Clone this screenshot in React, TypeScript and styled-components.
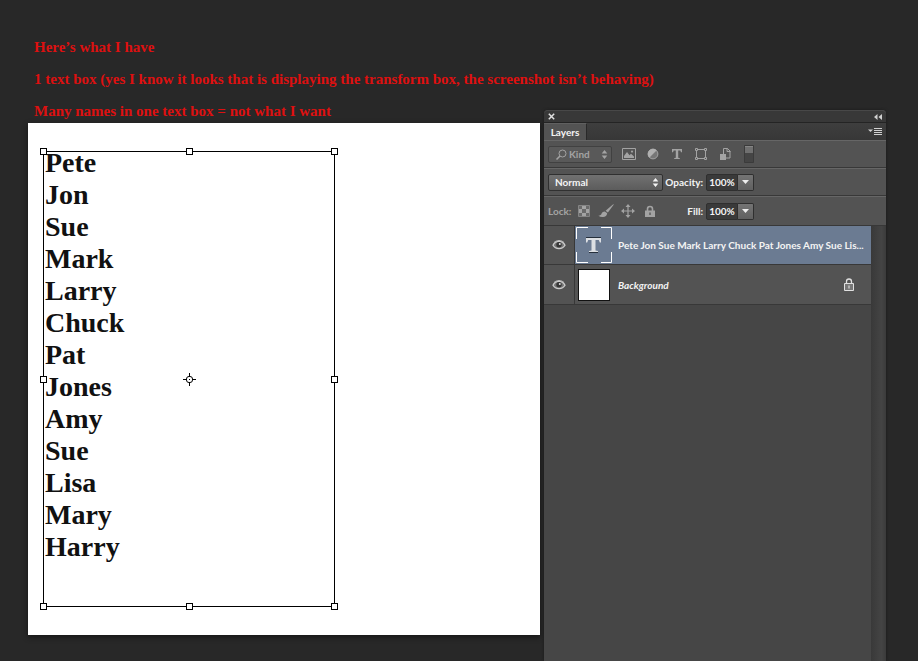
import React, { useState } from "react";
import styled, { createGlobalStyle, css } from "styled-components";

const ink = {
  desk: "#282828",
  panel: "#535353",
  well: "#464646",
  edge: "#383838",
  text: "#f4f4f4",
  dim: "#a3a3a3",
};

const GlobalStyle = createGlobalStyle`
  *, *::before, *::after { box-sizing: border-box; }
  body { margin: 0; background: ${ink.desk}; overflow: hidden; }
  button, input, select { font: inherit; color: inherit; margin: 0; padding: 0; border: 0; }
  svg { display: block; flex: none; }
`;

const Desk = styled.main`
  min-height: 100vh;
  display: grid;
  grid-template-columns: minmax(0, 1fr) 342px;
  grid-template-rows: auto 1fr;
  column-gap: 4px;
  padding: 31px 32px 0 28px;
  background: ${ink.desk};
`;

const Notes = styled.header`
  grid-column: 1 / -1;
  padding-left: 6px;
  height: 92px;
  font: bold 15px/32px "Liberation Serif", serif;
  color: #de1010;
  white-space: nowrap;
`;

const Note = styled.p`
  margin: 0;
`;

const Artboard = styled.section`
  align-self: start;
  aspect-ratio: 1;
  padding: 28px 0 0 15px;
  background: #fff;
  box-shadow: 0 2px 5px #161616;
`;

const TextFrame = styled.div`
  position: relative;
  width: 292px;
  padding-bottom: 48px;
  border: 1px solid #000;
`;

const Names = styled.ul`
  list-style: none;
  margin: 0;
  padding: 0 0 0 1px;
  display: grid;
  gap: 10px;
  font: bold 28px/22px "Liberation Serif", serif;
  color: #111;
`;

const Handle = styled.span<{ $x: number; $y: number }>`
  position: absolute;
  left: ${(p) => p.$x}%;
  top: ${(p) => p.$y}%;
  width: 7px;
  height: 7px;
  margin: ${(p) => (p.$y === 0 ? -4 : -3)}px 0 0 ${(p) => (p.$x === 0 ? -4 : -3)}px;
  border: 1px solid #000;
  background: #fff;
`;

const Pivot = styled.svg`
  position: absolute;
  left: 50%;
  top: 50%;
  margin: -6px 0 0 -6px;
`;

const Panel = styled.aside`
  display: flex;
  flex-direction: column;
  margin-top: -13px;
  border-radius: 4px 4px 0 0;
  background: ${ink.well};
  color: ${ink.text};
  font: 700 10px/14px Lato, sans-serif;
  box-shadow: 0 0 3px #1c1c1c;
`;

const TitleBar = styled.div`
  display: flex;
  justify-content: space-between;
  align-items: center;
  height: 13px;
  padding: 0 4px;
  border-top: 1px solid #484848;
  border-bottom: 1px solid #242424;
  border-radius: 4px 4px 0 0;
  background: #383838;
`;

const TabBar = styled.div`
  display: flex;
  justify-content: space-between;
  height: 17px;
  padding-right: 4px;
  background: linear-gradient(#3e3e3e, #373737);
`;

const Tab = styled.button`
  width: 43px;
  background: ${ink.panel};
  border-top: 1px solid #606060;
  border-right: 1px solid #292929;
`;

const IconButton = styled.button`
  display: grid;
  place-items: center;
  flex: none;
  background: none;
  color: ${ink.dim};
`;

const ToolRow = styled.div<{ $dim?: boolean }>`
  display: flex;
  align-items: center;
  height: 28px;
  padding-left: 4px;
  background: ${ink.panel};
  border-top: 1px solid #666;
  border-bottom: 1px solid ${ink.edge};
  color: ${(p) => (p.$dim ? ink.dim : ink.text)};
`;

const LockRow = styled(ToolRow)`
  height: 30px;
`;

const SelectBox = styled.label<{ $kind?: boolean }>`
  position: relative;
  display: flex;
  align-items: center;
  width: ${(p) => (p.$kind ? 64 : 115)}px;
  height: 17px;
  flex: none;
  border: 1px solid ${(p) => (p.$kind ? "#414141" : "#303030")};
  border-radius: 2px;
  background: ${(p) => (p.$kind ? "#595959" : "linear-gradient(#717171, #5c5c5c)")};

  select {
    appearance: none;
    width: 100%;
    height: 15px;
    padding-left: ${(p) => (p.$kind ? 20 : 6)}px;
    background: transparent;
    line-height: 15px;
  }

  select option { color: #111; }
`;

const SelectMark = styled.svg<{ $left?: boolean }>`
  position: absolute;
  top: 2px;
  ${(p) => (p.$left ? css`left: 6px;` : css`right: 3px;`)}
  pointer-events: none;
`;

const FilterIcons = styled.div`
  display: flex;
  align-items: center;
  gap: 8px;
  margin-left: 9px;
`;

const LockCaption = styled.span`
  width: 28px;
`;

const LockIcons = styled.div`
  display: flex;
  align-items: center;
  gap: 6px;
  width: 87px;
`;

const Amount = styled.label`
  display: flex;
  align-items: center;
  justify-content: flex-end;
  gap: 3px;
  width: 75px;
  color: ${ink.text};
`;

const AmountField = styled.span`
  display: flex;
  height: 17px;
  border: 1px solid #2f2f2f;
  border-radius: 2px 0 0 2px;
  background: #3a3a3a;

  input {
    width: 30px;
    background: transparent;
    text-align: center;
    line-height: 15px;
  }
`;

const AmountGroup = styled.div`
  display: flex;
  align-items: center;
`;

const Drop = styled.button`
  display: grid;
  place-items: center;
  width: 16px;
  height: 17px;
  border: 1px solid #2f2f2f;
  border-left: 0;
  border-radius: 0 2px 2px 0;
  background: linear-gradient(#747474, #606060);
`;

const Body = styled.div`
  flex: 1;
  display: grid;
  grid-template-columns: minmax(0, 1fr) 15px;
`;

const Scroll = styled.div`
  background: linear-gradient(90deg, #393939, #444 70%, #3b3b3b);
`;

const Layers = styled.ul`
  list-style: none;
  margin: 0;
  padding: 0;
`;

const LayerRow = styled.li<{ $selected?: boolean }>`
  display: flex;
  height: 39px;
  border-bottom: 1px solid ${ink.edge};
  background: ${(p) => (p.$selected ? "#6b7b92" : ink.panel)};

  & + & { height: 40px; }
`;

const Eye = styled(IconButton)`
  width: 31px;
  background: ${ink.panel};
  border-right: 1px solid ${ink.edge};
`;

const LayerButton = styled.button<{ $italic?: boolean }>`
  flex: 1;
  min-width: 0;
  display: flex;
  align-items: center;
  gap: 6px;
  padding-left: 1px;
  background: none;
  text-align: left;
  white-space: nowrap;
  font-style: ${(p) => (p.$italic ? "italic" : "normal")};
`;

const Thumb = styled.span`
  display: grid;
  place-items: center;
  width: 36px;
  height: 36px;
  flex: none;
`;

const Paper = styled.span`
  width: 32px;
  height: 32px;
  border: 1px solid #111;
  background: #fff;
`;

const LayerLock = styled.span`
  align-self: center;
  margin-right: 16px;
`;

const handles: [number, number][] = [
  [0, 0], [50, 0], [100, 0], [0, 50], [100, 50], [0, 100], [50, 100], [100, 100],
];

const people = [
  "Pete", "Jon", "Sue", "Mark", "Larry", "Chuck", "Pat",
  "Jones", "Amy", "Sue", "Lisa", "Mary", "Harry",
];

const UpDown = () => (
  <SelectMark width="7" height="11" viewBox="0 0 7 11" fill="currentColor" aria-hidden="true">
    <path d="M3.5 1 6.3 4.4H.7zM3.5 10 .7 6.6h5.6z" />
  </SelectMark>
);

const EyeIcon = () => (
  <svg width="14" height="12" viewBox="0 0 14 12" aria-hidden="true">
    <path d="M1 6.2C3.5 1.2 10.5 1.2 13 6.2 10.5 10.6 3.5 10.6 1 6.2z" fill="#777" stroke="#cdcdcd" strokeWidth="1.3" />
    <circle cx="7" cy="5.8" r="2.7" fill="#363636" />
    <circle cx="7.8" cy="5" r="1" fill="#ddd" />
    <path d="M2 3.5C5 .8 9 .8 12 3.5" fill="none" stroke="#bbb" />
  </svg>
);

const ImageIcon = () => (
  <svg width="14" height="12" viewBox="0 0 14 12" aria-hidden="true">
    <path d="M.5.5h13v11H.5z" fill="none" stroke="currentColor" />
    <path d="M2 10V8l3-4 2.5 3.2L9 5.8 12 8.5V10z" fill="currentColor" />
    <circle cx="10" cy="3.6" r="1.1" fill="currentColor" />
  </svg>
);

const AdjustIcon = () => (
  <svg width="12" height="12" viewBox="0 0 12 12" aria-hidden="true">
    <circle cx="6" cy="6" r="4.9" fill="#777" stroke="currentColor" />
    <path d="M9.7 2.3A5.2 5.2 0 0 0 2.3 9.7z" fill="#b0b0b0" />
  </svg>
);

const TypeIcon = () => (
  <svg width="12" height="12" viewBox="0 0 12 12" fill="currentColor" aria-hidden="true">
    <path d="M1 1h10v3.2h-1L9.3 2.4H7.2v7.4l1.7.4V11H3.1v-.8l1.7-.4V2.4H2.7L2 4.2H1z" />
  </svg>
);

const ShapeIcon = () => (
  <svg width="12" height="12" viewBox="0 0 12 12" fill="none" stroke="currentColor" aria-hidden="true">
    <path d="M.5.5h2v2h-2zM9.5.5h2v2h-2zM.5 9.5h2v2h-2zM9.5 9.5h2v2h-2zM3 1.5h6M3 10.5h6M1.5 3v6M10.500 3v6" />
  </svg>
);

const SmartIcon = () => (
  <svg width="12" height="14" viewBox="0 0 12 14" aria-hidden="true">
    <path d="M4.5 7V1.5h4l2.500 2.500v7H7" fill="none" stroke="currentColor" />
    <path d="M8 1v3.500h3.500" fill="none" stroke="currentColor" />
    <path d="M1 7h6v6H1z" fill="currentColor" />
  </svg>
);

const SwitchIcon = () => (
  <svg width="10" height="18" viewBox="0 0 10 18" aria-hidden="true">
    <path d="M.5.5h9v17h-9z" fill="#454545" stroke="#3b3b3b" />
    <path d="M1 1h8v7H1z" fill="#707070" />
    <path d="M1 1.500h8" stroke="#858585" />
  </svg>
);

const CheckerIcon = () => (
  <svg width="12" height="12" viewBox="0 0 12 12" aria-hidden="true">
    <path d="M.5.5h11v11H.5z" fill="#6a6a6a" stroke="#858585" />
    <path d="M4 1h4v3H4zM1 4h3v4H1zM8 4h3v4H8zM4 8h4v3H4z" fill="currentColor" />
  </svg>
);

const BrushIcon = () => (
  <svg width="17" height="14" viewBox="0 0 17 14" fill="currentColor" aria-hidden="true">
    <path d="M16 .3 9.9 8.600 7.600 6.800 14.900.6zM6.800 7.400l2.400 1.900c-.2 2.200-1.800 3.600-4.200 3.700C3.200 13.100 1.700 12.700.4 11.800c2-.1 2.700-.9 3.200-2.200.5-1.300 1.800-2.200 3.200-2.200z" />
  </svg>
);

const MoveIcon = () => (
  <svg width="14" height="14" viewBox="0 0 14 14" aria-hidden="true">
    <path d="M7 2v10M2 7h10" stroke="currentColor" strokeWidth="1.200" />
    <path d="M7 0l2.500 3h-5zM7 14l-2.500-3h5zM0 7l3-2.500v5zM14 7l-3 2.500v-5z" fill="currentColor" />
  </svg>
);

const LockIcon = () => (
  <svg width="12" height="13" viewBox="0 0 12 13" aria-hidden="true">
    <path d="M3.500 6V4a2.500 2.500 0 0 1 5 0v2" fill="none" stroke="currentColor" strokeWidth="1.600" />
    <path d="M1 5.500h10V12H1z" fill="currentColor" />
    <path d="M5.400 7.500h1.200v2.500H5.400z" fill="#4b4b4b" />
  </svg>
);

const TextThumb = () => (
  <svg width="36" height="36" viewBox="0 0 36 36" aria-hidden="true">
    <path d="M.5 12V.5H12M25 .5h10.500V12M.5 25v10.500H12M25 35.500h10.500V25" fill="none" stroke="#fff" />
    <path d="M10 11h15v4.500h-1.200l-1-2.500h-3.300v10.500l2.500.5v1h-9v-1l2.500-.5V13h-3.300l-1 2.500H10z" fill="#dcdfe3" />
    <path d="M10 10.500h15M13 25.500h9" stroke="#26303c" />
  </svg>
);

function Percent({ label }: { label: string }) {
  const [value, setValue] = useState("100%");
  return (
    <AmountGroup>
      <Amount>
        {label}:
        <AmountField>
          <input value={value} onChange={(e) => setValue(e.target.value)} />
        </AmountField>
      </Amount>
      <Drop aria-label={`${label} slider`}>
        <svg width="7" height="4" viewBox="0 0 7 4" aria-hidden="true">
          <path d="M0 0h7L3.500 4z" fill="#eee" />
        </svg>
      </Drop>
    </AmountGroup>
  );
}

const filters = [
  { name: "Filter pixel layers", icon: <ImageIcon /> },
  { name: "Filter adjustment layers", icon: <AdjustIcon /> },
  { name: "Filter type layers", icon: <TypeIcon /> },
  { name: "Filter shape layers", icon: <ShapeIcon /> },
  { name: "Filter smart objects", icon: <SmartIcon /> },
  { name: "Toggle filtering", icon: <SwitchIcon /> },
];

const locks = [
  { name: "Lock transparent pixels", icon: <CheckerIcon /> },
  { name: "Lock image pixels", icon: <BrushIcon /> },
  { name: "Lock position", icon: <MoveIcon /> },
  { name: "Lock all", icon: <LockIcon /> },
];

const ToolButton = styled(IconButton)`
  width: 16px;
  height: 18px;
`;

export default function App() {
  return (
    <>
      <GlobalStyle />
      <Desk>
        <Notes>
          <Note>Here’s what I have</Note>
          <Note>1 text box (yes I know it looks that is displaying the transform box, the screenshot isn’t behaving)</Note>
          <Note>Many names in one text box = not what I want</Note>
        </Notes>

        <Artboard aria-label="Canvas">
          <TextFrame>
            <Names>
              {people.map((name, i) => (
                <li key={i}>{name}</li>
              ))}
            </Names>
            {handles.map(([x, y]) => (
              <Handle key={`${x}-${y}`} $x={x} $y={y} />
            ))}
            <Pivot width="13" height="13" viewBox="0 0 13 13" fill="none" stroke="#000" aria-hidden="true">
              <circle cx="6.5" cy="6.5" r="3.200" />
              <path d="M6.500 0v4M6.500 9v4M0 6.500h4M9 6.500h4M6.500 6v1" />
            </Pivot>
          </TextFrame>
        </Artboard>

        <Panel aria-label="Layers panel">
          <TitleBar>
            <IconButton aria-label="Close">
              <svg width="7" height="7" viewBox="0 0 7 7" stroke="#e0e0e0" strokeWidth="1.500" aria-hidden="true">
                <path d="M.8.8l5.400 5.400M6.200.8.8 6.200" />
              </svg>
            </IconButton>
            <IconButton aria-label="Collapse">
              <svg width="8" height="6" viewBox="0 0 8 6" fill="#d0d0d0" aria-hidden="true">
                <path d="M3.500 0v6L0 3zM8 0v6L4.500 3z" />
              </svg>
            </IconButton>
          </TitleBar>
          <TabBar>
            <Tab>Layers</Tab>
            <IconButton aria-label="Panel menu">
              <svg width="14" height="9" viewBox="0 0 14 9" aria-hidden="true">
                <path d="M0 2.500h5L2.500 5z" fill="#d0d0d0" />
                <path d="M6 1.500h8M6 3.500h8M6 5.500h8M6 7.500h8" stroke="#d0d0d0" />
              </svg>
            </IconButton>
          </TabBar>

          <ToolRow $dim>
            <SelectBox $kind>
              <SelectMark $left width="12" height="12" viewBox="0 0 12 12" fill="none" stroke="currentColor" aria-hidden="true">
                <circle cx="7.500" cy="4.500" r="3.500" />
                <path d="M5 7 1.500 10.500" strokeWidth="1.600" />
              </SelectMark>
              <select aria-label="Filter type" defaultValue="Kind">
                <option>Kind</option>
              </select>
              <UpDown />
            </SelectBox>
            <FilterIcons>
              {filters.map((f) => (
                <ToolButton key={f.name} aria-label={f.name}>{f.icon}</ToolButton>
              ))}
            </FilterIcons>
          </ToolRow>
          <ToolRow>
            <SelectBox>
              <select aria-label="Blend mode" defaultValue="Normal">
                <option>Normal</option>
              </select>
              <UpDown />
            </SelectBox>
            <Percent label="Opacity" />
          </ToolRow>
          <LockRow $dim>
            <LockCaption>Lock:</LockCaption>
            <LockIcons>
              {locks.map((l) => (
                <ToolButton key={l.name} aria-label={l.name}>{l.icon}</ToolButton>
              ))}
            </LockIcons>
            <Percent label="Fill" />
          </LockRow>

          <Body>
            <Layers>
              <LayerRow $selected>
                <Eye aria-label="Hide text layer"><EyeIcon /></Eye>
                <LayerButton>
                  <Thumb><TextThumb /></Thumb>
                  Pete Jon Sue Mark Larry Chuck Pat Jones Amy Sue Lis...
                </LayerButton>
              </LayerRow>
              <LayerRow>
                <Eye aria-label="Hide background"><EyeIcon /></Eye>
                <LayerButton $italic>
                  <Thumb><Paper /></Thumb>
                  Background
                </LayerButton>
                <LayerLock>
                  <svg width="12" height="13" viewBox="0 0 12 13" role="img" aria-label="Locked">
                    <path d="M3.500 6V3.500a2.500 2.500 0 0 1 5 0V6" fill="none" stroke="#e0e0e0" strokeWidth="1.300" />
                    <path d="M1.500 5.500h9v7h-9z" fill="#777" stroke="#e0e0e0" />
                    <path d="M5.500 7.500h1v3h-1z" fill="#eee" />
                  </svg>
                </LayerLock>
              </LayerRow>
            </Layers>
            <Scroll />
          </Body>
        </Panel>
      </Desk>
    </>
  );
}
